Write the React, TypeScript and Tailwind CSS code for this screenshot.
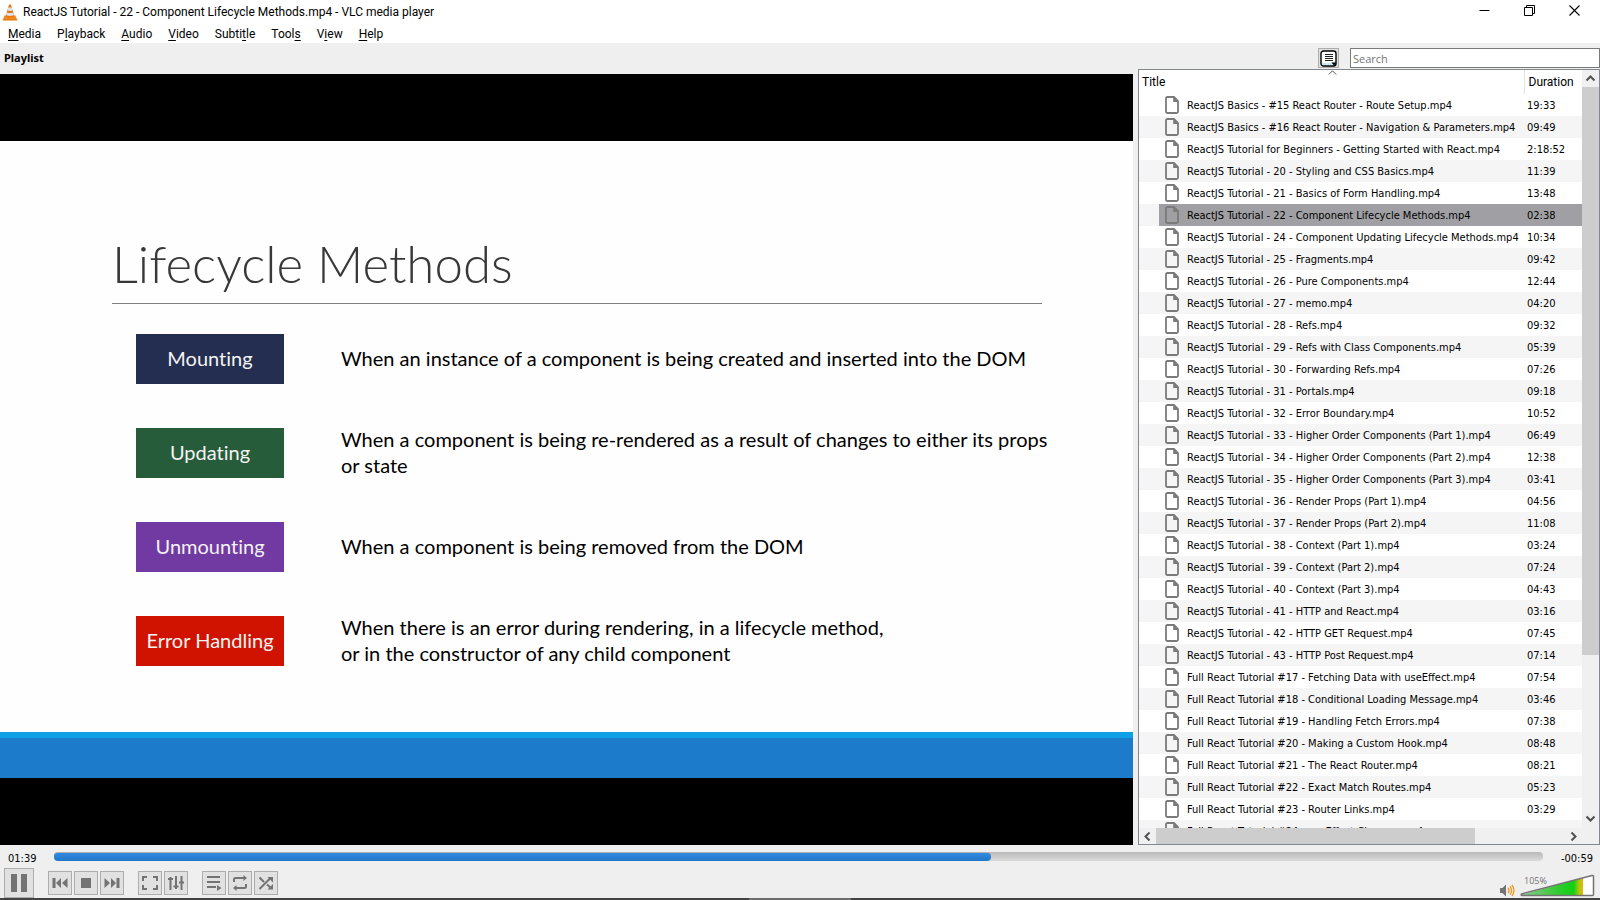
import React from "react";

const UI = "font-['Roboto','Open_Sans',sans-serif]";
const TAHOMA = "font-['DejaVu_Sans_Condensed','DejaVu_Sans',sans-serif]";

const MENUS: [string, string, string][] = [
  ["", "M", "edia"],
  ["P", "l", "ayback"],
  ["", "A", "udio"],
  ["", "V", "ideo"],
  ["Subti", "t", "le"],
  ["Tool", "s", ""],
  ["V", "i", "ew"],
  ["", "H", "elp"],
];

const PLAYLIST: [string, string][] = [
  ["ReactJS Basics - #15 React Router - Route Setup.mp4", "19:33"],
  ["ReactJS Basics - #16 React Router - Navigation & Parameters.mp4", "09:49"],
  ["ReactJS Tutorial for Beginners - Getting Started with React.mp4", "2:18:52"],
  ["ReactJS Tutorial - 20 - Styling and CSS Basics.mp4", "11:39"],
  ["ReactJS Tutorial - 21 - Basics of Form Handling.mp4", "13:48"],
  ["ReactJS Tutorial - 22 - Component Lifecycle Methods.mp4", "02:38"],
  ["ReactJS Tutorial - 24 - Component Updating Lifecycle Methods.mp4", "10:34"],
  ["ReactJS Tutorial - 25 - Fragments.mp4", "09:42"],
  ["ReactJS Tutorial - 26 - Pure Components.mp4", "12:44"],
  ["ReactJS Tutorial - 27 - memo.mp4", "04:20"],
  ["ReactJS Tutorial - 28 - Refs.mp4", "09:32"],
  ["ReactJS Tutorial - 29 - Refs with Class Components.mp4", "05:39"],
  ["ReactJS Tutorial - 30 - Forwarding Refs.mp4", "07:26"],
  ["ReactJS Tutorial - 31 - Portals.mp4", "09:18"],
  ["ReactJS Tutorial - 32 - Error Boundary.mp4", "10:52"],
  ["ReactJS Tutorial - 33 - Higher Order Components (Part 1).mp4", "06:49"],
  ["ReactJS Tutorial - 34 - Higher Order Components (Part 2).mp4", "12:38"],
  ["ReactJS Tutorial - 35 - Higher Order Components (Part 3).mp4", "03:41"],
  ["ReactJS Tutorial - 36 - Render Props (Part 1).mp4", "04:56"],
  ["ReactJS Tutorial - 37 - Render Props (Part 2).mp4", "11:08"],
  ["ReactJS Tutorial - 38 - Context (Part 1).mp4", "03:24"],
  ["ReactJS Tutorial - 39 - Context (Part 2).mp4", "07:24"],
  ["ReactJS Tutorial - 40 - Context (Part 3).mp4", "04:43"],
  ["ReactJS Tutorial - 41 - HTTP and React.mp4", "03:16"],
  ["ReactJS Tutorial - 42 - HTTP GET Request.mp4", "07:45"],
  ["ReactJS Tutorial - 43 - HTTP Post Request.mp4", "07:14"],
  ["Full React Tutorial #17 - Fetching Data with useEffect.mp4", "07:54"],
  ["Full React Tutorial #18 - Conditional Loading Message.mp4", "03:46"],
  ["Full React Tutorial #19 - Handling Fetch Errors.mp4", "07:38"],
  ["Full React Tutorial #20 - Making a Custom Hook.mp4", "08:48"],
  ["Full React Tutorial #21 - The React Router.mp4", "08:21"],
  ["Full React Tutorial #22 - Exact Match Routes.mp4", "05:23"],
  ["Full React Tutorial #23 - Router Links.mp4", "03:29"],
  ["Full React Tutorial #24 - useEffect Cleanup.mp4", ""],
];
const CURRENT = 5;

const PHASES = [
  { name: "Mounting", color: "bg-[#242e50]", lines: ["When an instance of a component is being created and inserted into the DOM"] },
  { name: "Updating", color: "bg-[#265c3a]", lines: ["When a component is being re-rendered as a result of changes to either its props", "or state"] },
  { name: "Unmounting", color: "bg-[#7139a2]", lines: ["When a component is being removed from the DOM"] },
  { name: "Error Handling", color: "bg-[#d01300]", lines: ["When there is an error during rendering, in a lifecycle method,", "or in the constructor of any child component"] },
];

function Cone() {
  return (
    <svg width="16" height="17" viewBox="0 0 16 17" aria-hidden="true">
      <path d="M2.6 11.5h10.8l1.9 4.6H.7z" fill="#f08a1c" />
      <path d="M.9 15.2h14.2l.3 1.3H.6z" fill="#e07a10" />
      <path d="M7 .8Q8 .2 9 .8l3.4 11.4Q8 14.9 3.6 12.2z" fill="#e9741a" />
      <path d="M6.2 3.6h3.6l.9 2.9Q8 7.4 5.3 6.5z" fill="#dfe3e6" />
      <path d="M4.8 8.4Q8 9.7 11.2 8.4l.8 2.5Q8 12.9 4 10.9z" fill="#dfe3e6" />
    </svg>
  );
}

function FileIcon() {
  return (
    <svg width="14" height="18" viewBox="0 0 14 18" className="block" aria-hidden="true">
      <path d="M2.5 1H9l4 4v10.5Q13 17 11.5 17h-9Q1 17 1 15.5v-13Q1 1 2.5 1z" fill="none" stroke="#7a7a7a" strokeWidth="1.8" />
      <path d="M8.2 1.2h1.2l3.6 3.6V6H8.2z" fill="#7a7a7a" />
    </svg>
  );
}

function Chevron({ d }: { d: string }) {
  return (
    <svg width="9" height="9" viewBox="0 0 9 9" aria-hidden="true">
      <path d={d} fill="none" stroke="#505050" strokeWidth="2" />
    </svg>
  );
}

function TitleBar() {
  const btn = "flex h-full w-[45px] items-center justify-center pb-1";
  return (
    <header className={`flex h-6 shrink-0 items-center pl-[2px] text-xs ${UI}`}>
      <Cone />
      <h1 className="ml-[5px] flex-1 whitespace-nowrap">
        ReactJS Tutorial - 22 - Component Lifecycle Methods.mp4 - VLC media player
      </h1>
      <div className="mr-[3px] flex h-full">
        <button aria-label="Minimize" className={btn}>
          <svg width="11" height="11" viewBox="0 0 11 11"><path d="M.5 5.5h10" stroke="#000" /></svg>
        </button>
        <button aria-label="Restore" className={btn}>
          <svg width="11" height="11" viewBox="0 0 11 11" fill="none" stroke="#000">
            <path d="M.5 2.5h8v8h-8zM2.5 2.5v-2h8v8h-2" />
          </svg>
        </button>
        <button aria-label="Close" className={btn}>
          <svg width="11" height="11" viewBox="0 0 11 11"><path d="M.5.5l10 10M10.5.5l-10 10" stroke="#000" strokeWidth="1.1" /></svg>
        </button>
      </div>
    </header>
  );
}

function MenuBar() {
  return (
    <nav className={`flex h-[19px] shrink-0 items-center text-xs ${UI}`}>
      {MENUS.map(([a, key, b]) => (
        <button key={a + key + b} className="px-2">
          {a}
          <span className="underline underline-offset-2">{key}</span>
          {b}
        </button>
      ))}
    </nav>
  );
}

function PlaylistToolbar() {
  return (
    <div className="flex h-[26px] shrink-0 items-end bg-[#efefef] pb-px">
      <h2 className="flex-1 pl-1 font-['Noto_Sans',sans-serif] text-[11px] leading-5 font-bold">Playlist</h2>
      <button aria-label="Change playlist view" className="flex h-5 w-[21px] items-center justify-center border border-[#adadad] bg-[#e1e1e1]">
        <svg width="17" height="17" viewBox="0 0 17 17">
          <rect x="1" y="1" width="15" height="15" rx="2.5" fill="#fff" stroke="#000" strokeWidth="1.4" />
          <path d="M2 12q6 3 13-1v4H2z" fill="#cfe4f5" />
          <path d="M5 4.5h8M5 6.5h8M5 8.5h8M5 10.5h8" stroke="#222" />
          <path d="M11.5 12.5h5L14 15.500z" fill="#000" />
        </svg>
      </button>
      <input
        type="search"
        aria-label="Search"
        placeholder="Search"
        className="ml-[11px] h-5 w-[250px] appearance-none border border-[#7a7a7a] bg-white px-[2px] font-['Open_Sans',sans-serif] text-[11px] outline-none placeholder:text-[#757575]"
      />
    </div>
  );
}

function Slide() {
  return (
    <article className="bg-[#fefefe] font-['Lato',sans-serif] [font-variant-ligatures:none]">
      <div className="pt-[91px] pr-[91px] pb-[66px] pl-[112px]">
        <h2 className="border-b border-[#808080] pb-[7px] text-[51px] leading-[64px] font-light text-[#383838]">
          Lifecycle Methods
        </h2>
        <dl className="mt-[30px] flex flex-col gap-11 pl-6 text-xl leading-[26px]">
          {PHASES.map((p) => (
            <div key={p.name} className="flex h-[50px] items-center">
              <dt className={`flex h-full w-[148px] shrink-0 items-center justify-center pb-[2px] text-[#f3f3f3] ${p.color}`}>{p.name}</dt>
              <dd className="ml-[57px] pb-[2px] whitespace-nowrap text-black">
                {p.lines.map((l) => (
                  <p key={l}>{l}</p>
                ))}
              </dd>
            </div>
          ))}
        </dl>
      </div>
      <div className="h-[6px] bg-[#10a0e6]" />
      <div className="h-10 bg-[#1c7bca]" />
    </article>
  );
}

function PlaylistPanel() {
  return (
    <aside className="flex w-[462px] shrink-0 border border-[#828790] bg-white">
      <div className="flex min-w-0 flex-1 flex-col">
        <div className="relative min-h-0 flex-1 overflow-hidden">
          <svg width="9" height="5" viewBox="0 0 9 5" className="absolute top-0 left-[189px]">
            <path d="M.8 4.5L4.5.8l3.7 3.700" fill="none" stroke="#555" />
          </svg>
          <table className={`w-full table-fixed border-collapse text-[11px] leading-4 whitespace-nowrap ${TAHOMA}`}>
            <colgroup>
              <col className="w-5" />
              <col />
              <col className="w-[58px]" />
            </colgroup>
            <thead className={`text-left text-xs ${UI}`}>
              <tr className="h-6">
                <th colSpan={2} className="p-0 pl-[3px] font-normal">Title</th>
                <th className="border-l border-[#e5e5e5] p-0 pl-1 font-normal">Duration</th>
              </tr>
            </thead>
            <tbody>
              {PLAYLIST.map(([title, time], i) => {
                const cell = i === CURRENT ? "bg-[#a0a0a4] p-0" : "p-0";
                return (
                  <tr key={title} className="h-[22px] even:bg-[#f5f5f5]">
                    <td className="p-0" />
                    <td className={cell}>
                      <div className="flex items-center gap-2 pl-[6px]">
                        <FileIcon />
                        <span className="pt-[2px]">{title}</span>
                      </div>
                    </td>
                    <td className={cell}>
                      <div className="pt-[2px] pl-[3px]">{time}</div>
                    </td>
                  </tr>
                );
              })}
            </tbody>
          </table>
        </div>
        <div className="flex h-4 shrink-0 bg-[#f0f0f0]">
          <button aria-label="Scroll left" className="flex w-[17px] items-center justify-center">
            <Chevron d="M6.5.5l-4 4 4 4" />
          </button>
          <div className="flex-1">
            <div className="h-full w-[78%] bg-[#cdcdcd]" />
          </div>
          <button aria-label="Scroll right" className="flex w-[17px] items-center justify-center">
            <Chevron d="M2.5.5l4 4-4 4" />
          </button>
        </div>
      </div>
      <div className="flex w-[17px] shrink-0 flex-col bg-[#f0f0f0] pb-[17px]">
        <button aria-label="Scroll up" className="flex h-[17px] items-center justify-center">
          <Chevron d="M.5 6.5l4-4 4 4" />
        </button>
        <div className="flex-1">
          <div className="h-[78.5%] bg-[#cdcdcd]" />
        </div>
        <button aria-label="Scroll down" className="flex h-[17px] items-center justify-center">
          <Chevron d="M.5 2.5l4 4 4-4" />
        </button>
      </div>
    </aside>
  );
}

function Tool({ label, children }: { label: string; children: React.ReactNode }) {
  return (
    <button aria-label={label} className="flex size-6 items-center justify-center border border-[#adadad] bg-[#e1e1e1]">
      <svg width="16" height="16" viewBox="0 0 16 16" fill="none" stroke="#737373" strokeWidth="2">
        {children}
      </svg>
    </button>
  );
}

function Controls() {
  const played = 62.95;
  return (
    <footer className="flex shrink-0 flex-col bg-[#efefef]">
      <div className={`flex h-[23px] items-center pr-[7px] pl-2 text-[11px] leading-4 ${TAHOMA}`}>
        <span className="w-[46px] pt-[5px]">01:39</span>
        <div className="relative mb-[7px] h-[9px] flex-1 self-end rounded-[4px] bg-gradient-to-b from-[#b9b9b9] to-[#dcdcdc]">
          <div
            className="h-full rounded-[4px] border-t border-[#b0b0b0] bg-gradient-to-b from-[#2f8ae0] to-[#2277c8]"
            style={{ width: `${played}%` }}
          />
          <input type="range" aria-label="Position" defaultValue={played} className="absolute inset-0 w-full opacity-0" />
        </div>
        <span className="w-[50px] pt-[5px] text-right">-00:59</span>
      </div>
      <div className="flex h-[30px] items-center pl-1">
        <button aria-label="Pause" className="mr-[14px] flex size-[30px] items-center justify-center border border-[#adadad] bg-[#e1e1e1]">
          <svg width="16" height="18" viewBox="0 0 16 18" fill="#737373"><path d="M0 0h6v18H0zM10 0h6v18h-6z" /></svg>
        </button>
        <div className="flex gap-[14px]">
          <div className="flex gap-[2px]">
            <Tool label="Previous">
              <path d="M.5 3h3v10h-3zM4 8l5-5v10zM10 8l5.500-5v10z" fill="#737373" stroke="none" />
            </Tool>
            <Tool label="Stop">
              <path d="M3 3h10v10H3z" fill="#737373" stroke="none" />
            </Tool>
            <Tool label="Next">
              <path d="M15.5 3h-3v10h3zM12 8L7 3v10zM6 8L.5 3v10z" fill="#737373" stroke="none" />
            </Tool>
          </div>
          <div className="flex gap-[2px]">
            <Tool label="Fullscreen">
              <path d="M0 2h5M11 2h5M15 1v5M0 14h5M11 14h5M15 15v-5M1 1v5M1 15v-5" />
            </Tool>
            <Tool label="Extended settings">
              <path d="M2.5 2v13M8 1v13M13.5 1v14" />
              <path d="M0 4h5M5.5 11.5h5M11 7.5h5" />
            </Tool>
          </div>
          <div className="flex gap-[2px]">
            <Tool label="Toggle playlist">
              <path d="M1 2h13M1 7h13M1 12h9" strokeWidth="2.2" />
              <path d="M11 10l4.5 3-4.500 3z" fill="#737373" stroke="none" />
            </Tool>
            <Tool label="Loop">
              <path d="M2 7V4.5Q2 3 3.5 3H12M14 9v2.5Q14 13 12.5 13H4" />
              <path d="M11.5 0l3.500 3-3.500 3zM4.5 10L1 13l3.500 3z" fill="#737373" stroke="none" />
            </Tool>
            <Tool label="Shuffle">
              <path d="M1.5 14L12 3.5M1.5 2.5L6 7M9 9.5l4 3.500" />
              <path d="M9.5 2H15v5.500zM15 9v5.500H9.500z" fill="#737373" stroke="none" />
            </Tool>
          </div>
        </div>
        <div className="ml-auto flex items-end self-end pr-[5px] pb-px">
          <button aria-label="Mute">
            <svg width="15" height="13" viewBox="0 0 15 13" className="block">
              <path d="M0 4h2.500L6 .5v12L2.500 9H0z" fill="#737373" />
              <path d="M8 4q2 2.500 0 5M10 2.500q3.200 4 0 8M12 1q4 5.500 0 11" fill="none" stroke="#f7941e" strokeWidth="1.3" />
            </svg>
          </button>
          <div className="relative ml-[5px] h-[23px] w-[75px]">
            <svg width="75" height="23" viewBox="0 0 75 23" className="block">
              <defs>
                <linearGradient id="vol" x1="0" x2="1">
                  <stop offset="0" stopColor="#8fc98f" />
                  <stop offset="0.6" stopColor="#2fcb2f" />
                  <stop offset="0.85" stopColor="#12d012" />
                  <stop offset="0.93" stopColor="#a8c810" />
                  <stop offset="1" stopColor="#f0b400" />
                </linearGradient>
              </defs>
              <path d="M2 20.5L63 4v17.500H2z" fill="url(#vol)" />
              <path d="M63 4l10-2.500v20H63z" fill="#fff" />
              <path d="M1.5 20L72 1.500q1.500-.3 1.500 1V20.500q0 1-1 1H2q-1.500-.6-.5-1.500z" fill="none" stroke="#737373" strokeWidth="1.5" />
            </svg>
            <span className="absolute top-px left-1 font-['Open_Sans',sans-serif] text-[9px] leading-3 text-[#737373]">105%</span>
            <input type="range" aria-label="Volume" max={125} defaultValue={105} className="absolute inset-0 w-full opacity-0" />
          </div>
        </div>
      </div>
      <div className="flex h-[2px] justify-center bg-[#434345]">
        <div className="w-[102px] bg-[#6c6c6e]" />
      </div>
    </footer>
  );
}

export default function App() {
  return (
    <div className="flex h-screen flex-col overflow-hidden bg-white text-black">
      <TitleBar />
      <MenuBar />
      <PlaylistToolbar />
      <main className="flex min-h-0 flex-1 gap-[5px] bg-[#efefef]">
        <section className="flex min-w-0 flex-1 flex-col pt-[5px]">
          <div className="flex min-h-0 flex-1 flex-col justify-center overflow-hidden bg-black">
            <Slide />
          </div>
        </section>
        <PlaylistPanel />
      </main>
      <Controls />
    </div>
  );
}
